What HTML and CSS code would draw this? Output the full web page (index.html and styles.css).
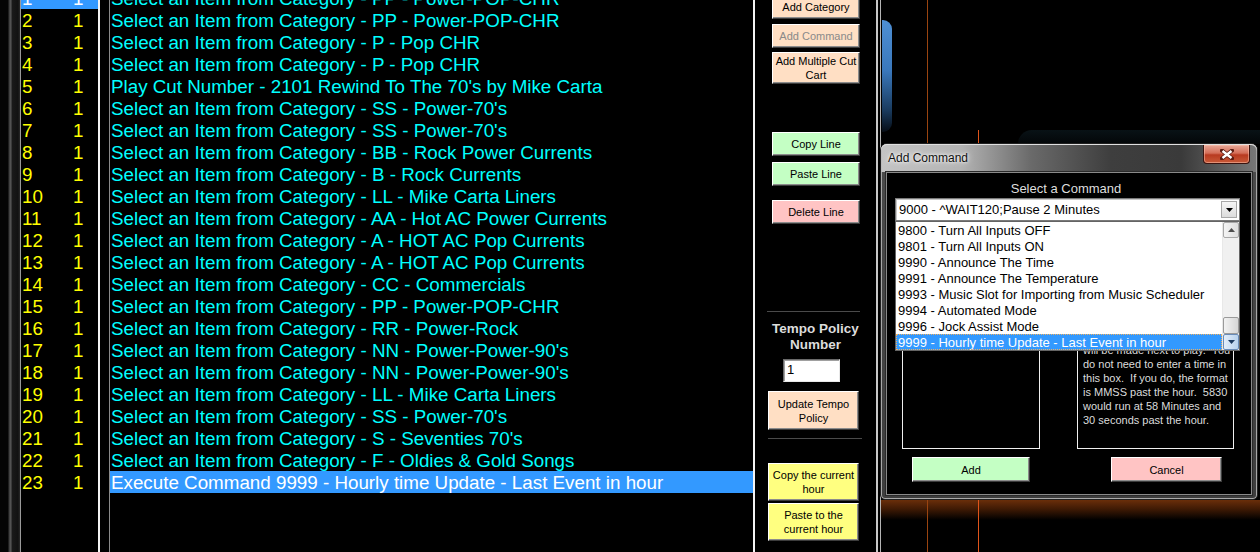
FILE: index.html
```html
<!DOCTYPE html>
<html lang="en">
<head>
    <meta charset="UTF-8">
    <title>Hour Editor</title>
    <link rel="stylesheet" href="styles.css">
</head>
<body>
    <div class="edge"></div>

    <div class="list nums">
        <div class="rows">
            <div class="row sel"><span>1</span><span>1</span></div>
            <div class="row"><span>2</span><span>1</span></div>
            <div class="row"><span>3</span><span>1</span></div>
            <div class="row"><span>4</span><span>1</span></div>
            <div class="row"><span>5</span><span>1</span></div>
            <div class="row"><span>6</span><span>1</span></div>
            <div class="row"><span>7</span><span>1</span></div>
            <div class="row"><span>8</span><span>1</span></div>
            <div class="row"><span>9</span><span>1</span></div>
            <div class="row"><span>10</span><span>1</span></div>
            <div class="row"><span>11</span><span>1</span></div>
            <div class="row"><span>12</span><span>1</span></div>
            <div class="row"><span>13</span><span>1</span></div>
            <div class="row"><span>14</span><span>1</span></div>
            <div class="row"><span>15</span><span>1</span></div>
            <div class="row"><span>16</span><span>1</span></div>
            <div class="row"><span>17</span><span>1</span></div>
            <div class="row"><span>18</span><span>1</span></div>
            <div class="row"><span>19</span><span>1</span></div>
            <div class="row"><span>20</span><span>1</span></div>
            <div class="row"><span>21</span><span>1</span></div>
            <div class="row"><span>22</span><span>1</span></div>
            <div class="row"><span>23</span><span>1</span></div>
        </div>
    </div>

    <div class="gap"></div>

    <div class="list main">
        <div class="rows">
            <div class="row">Select an Item from Category - PP - Power-POP-CHR</div>
            <div class="row">Select an Item from Category - PP - Power-POP-CHR</div>
            <div class="row">Select an Item from Category - P - Pop CHR</div>
            <div class="row">Select an Item from Category - P - Pop CHR</div>
            <div class="row">Play Cut Number - 2101 Rewind To The 70's by Mike Carta</div>
            <div class="row">Select an Item from Category - SS - Power-70's</div>
            <div class="row">Select an Item from Category - SS - Power-70's</div>
            <div class="row">Select an Item from Category - BB - Rock Power Currents</div>
            <div class="row">Select an Item from Category - B - Rock Currents</div>
            <div class="row">Select an Item from Category - LL - Mike Carta Liners</div>
            <div class="row">Select an Item from Category - AA - Hot AC Power Currents</div>
            <div class="row">Select an Item from Category - A - HOT AC Pop Currents</div>
            <div class="row">Select an Item from Category - A - HOT AC Pop Currents</div>
            <div class="row">Select an Item from Category - CC - Commercials</div>
            <div class="row">Select an Item from Category - PP - Power-POP-CHR</div>
            <div class="row">Select an Item from Category - RR - Power-Rock</div>
            <div class="row">Select an Item from Category - NN - Power-Power-90's</div>
            <div class="row">Select an Item from Category - NN - Power-Power-90's</div>
            <div class="row">Select an Item from Category - LL - Mike Carta Liners</div>
            <div class="row">Select an Item from Category - SS - Power-70's</div>
            <div class="row">Select an Item from Category - S - Seventies 70's</div>
            <div class="row">Select an Item from Category - F - Oldies &amp; Gold Songs</div>
            <div class="row sel">Execute Command 9999 - Hourly time Update - Last Event in hour</div>
        </div>
    </div>

    <div class="panel">
        <div class="btn peach top b-cat">Add Category</div>
        <div class="btn peach top b-cmd disabled">Add Command</div>
        <div class="btn peach top b-multi">Add Multiple Cut<br>Cart</div>
        <div class="btn green top b-copy">Copy Line</div>
        <div class="btn green top b-paste">Paste Line</div>
        <div class="btn pink top b-del">Delete Line</div>

        <div class="sep sep-1"></div>
        <div class="tempo-label">Tempo Policy<br>Number</div>
        <div class="tempo-input">1</div>
        <div class="btn peach low b-tempo">Update Tempo<br>Policy</div>
        <div class="sep sep-2"></div>
        <div class="btn yellow low b-hour">Copy the current<br>hour</div>
        <div class="btn yellow low b-hour2">Paste to the<br>current hour</div>
    </div>

    <div class="desk">
        <div class="desk-line"></div>
        <div class="blue-glow"></div>
        <div class="orange-v v1 upper"></div>
        <div class="orange-v v2 upper"></div>
        <div class="teal-band"></div>
        <div class="orange-glow"></div>
        <div class="orange-v v1 lower"></div>
        <div class="orange-v v2 lower"></div>

        <!-- Add Command dialog -->
        <div class="dlg">
            <div class="dlg-title">
                <span>Add Command</span>
                <div class="close-btn">
                    <svg width="14" height="11" viewBox="0 0 14 11">
                        <path d="M2 1.5 L12 9.5 M12 1.5 L2 9.5" stroke="#5a1a10" stroke-width="4" stroke-linecap="square"/>
                        <path d="M2.5 2 L11.5 9 M11.5 2 L2.5 9" stroke="#fff" stroke-width="2.4"/>
                    </svg>
                </div>
            </div>
            <div class="dlg-body">
                <div class="caption">Select a Command</div>
                <div class="combo">
                    <span>9000 - ^WAIT120;Pause 2 Minutes</span>
                    <div class="combo-btn">
                        <svg width="7" height="4" viewBox="0 0 7 4"><polygon points="0,0 7,0 3.5,4" fill="#000"/></svg>
                    </div>
                </div>

                <div class="boxes">
                    <div class="box box-left"></div>
                    <div class="box box-right">
                        will be made next to play.&nbsp; You<br>
                        do not need to enter a time in<br>
                        this box.&nbsp; If you do, the format<br>
                        is MMSS past the hour.&nbsp; 5830<br>
                        would run at 58 Minutes and<br>
                        30 seconds past the hour.
                    </div>
                </div>

                <div class="dlg-buttons">
                    <div class="btn green b-add">Add</div>
                    <div class="btn pink b-cancel">Cancel</div>
                </div>

                <div class="dropdown">
                    <div class="opt">9800 - Turn All Inputs OFF</div>
                    <div class="opt">9801 - Turn All Inputs ON</div>
                    <div class="opt">9990 - Announce The Time</div>
                    <div class="opt">9991 - Announce The Temperature</div>
                    <div class="opt">9993 - Music Slot for Importing from Music Scheduler</div>
                    <div class="opt">9994 - Automated Mode</div>
                    <div class="opt">9996 - Jock Assist Mode</div>
                    <div class="opt active">9999 - Hourly time Update - Last Event in hour</div>
                    <div class="scrollbar">
                        <div class="sb-btn">
                            <svg width="7" height="4" viewBox="0 0 7 4"><polygon points="0,4 7,4 3.5,0" fill="#4d4d4d"/></svg>
                        </div>
                        <div class="sb-track"></div>
                        <div class="sb-thumb"></div>
                        <div class="sb-btn sb-down">
                            <svg width="7" height="4" viewBox="0 0 7 4"><polygon points="0,0 7,0 3.5,4" fill="#1c3a60"/></svg>
                        </div>
                    </div>
                </div>
            </div>
        </div>
    </div>
</body>
</html>
```

FILE: styles.css
```css
* {
    margin: 0;
    padding: 0;
    box-sizing: border-box;
}

body {
    width: 1260px;
    height: 552px;
    overflow: hidden;
    background: #000;
    display: flex;
    font-family: 'Liberation Sans', Arial, sans-serif;
}

/* Left edge strip */
.edge {
    width: 20px;
    background:
        linear-gradient(to right, #050505 0, #050505 8px, #3a3a3a 9px, #5a5a5a 11px, #1a1a1a 12px, #121212 18px, #2a2a2a 20px);
}

/* Lists */
.list {
    height: 552px;
    overflow: hidden;
    background: #000;
}

.rows {
    margin-top: -13px;
}

.row {
    height: 22px;
    line-height: 23px;
    font-size: 18.8px;
    white-space: nowrap;
}

.nums {
    width: 80px;
    border-left: 1px solid #9a9a9a;
    border-right: 2px solid #f4f4f4;
    color: #ffff00;
}

.nums .row {
    display: grid;
    grid-template-columns: 51px 1fr;
    padding-left: 1px;
}

.gap {
    width: 9px;
    background: #000;
}

.main {
    width: 646px;
    border-left: 1px solid #8a8a8a;
    border-right: 2px solid #f4f4f4;
    color: #00ffff;
}

.main .row {
    padding-left: 1px;
}

.row.sel {
    background: #3399ff;
    color: #fff;
}

/* Button panel */
.panel {
    width: 123px;
    border-right: 2px solid #c8c8c8;
    display: flex;
    flex-direction: column;
    align-items: flex-start;
}

.btn {
    display: flex;
    align-items: center;
    justify-content: center;
    text-align: center;
    font-size: 11px;
    line-height: 14px;
    color: #000;
    border: 1px solid;
    border-color: #fff #3c3c3c #3c3c3c #fff;
    box-shadow: inset -1px -1px 0 #8c8c8c;
}

.peach { background: #ffdfc4; }
.green { background: #c4ffc4; }
.pink { background: #ffc4c4; }
.yellow { background: #ffff80; }

.disabled {
    color: #8a8a8a;
}

.top {
    margin-left: 17px;
    width: 88px;
    height: 24px;
}

.low {
    margin-left: 13px;
    width: 91px;
    height: 38px;
}

.b-cat { margin-top: -5px; }
.b-cmd { margin-top: 5px; }
.b-multi { margin-top: 4px; height: 32px; }
.b-copy { margin-top: 48px; }
.b-paste { margin-top: 6px; }
.b-del { margin-top: 14px; }

.sep {
    height: 2px;
    border-top: 1px solid #4a4a4a;
}

.sep-1 {
    margin-top: 87px;
    margin-left: 12px;
    width: 93px;
}

.sep-2 {
    margin-top: 8px;
    margin-left: 13px;
    width: 94px;
}

.tempo-label {
    margin-top: 8px;
    width: 121px;
    text-align: center;
    font-size: 13.5px;
    font-weight: 700;
    line-height: 16px;
    color: #dcdcdc;
}

.tempo-input {
    margin-top: 6px;
    margin-left: 28px;
    width: 57px;
    height: 23px;
    background: #fff;
    border: 1px solid;
    border-color: #6a6a6a #e8e8e8 #e8e8e8 #6a6a6a;
    box-shadow: inset 1px 1px 0 #a0a0a0;
    font-size: 13px;
    line-height: 20px;
    padding-left: 3px;
    color: #000;
}

.b-tempo { margin-top: 9px; height: 39px; }
.b-hour { margin-top: 23px; }
.b-hour2 { margin-top: 2px; }

/* Desktop area behind the dialog */
.desk {
    position: relative;
    flex: 1;
    background: #000;
}

.desk-line {
    position: absolute;
    left: 2px;
    top: 0;
    bottom: 0;
    width: 1px;
    background: #b4b4b4;
}

.blue-glow {
    position: absolute;
    left: 4px;
    top: 20px;
    width: 10px;
    height: 112px;
    border-radius: 0 9px 9px 0;
    background: linear-gradient(to bottom, #4e8fd4 0%, #3a78bc 45%, #1a3c60 80%, #060d16 100%);
}

.orange-v {
    position: absolute;
    width: 1px;
}

.v1 { left: 49px; background: #9a4410; }
.v2 { left: 100px; background: #e0541a; }

.v1.upper { top: 0; height: 143px; }
.v2.upper { top: 130px; height: 13px; }
.lower { top: 500px; bottom: 0; }

.teal-band {
    position: absolute;
    left: 140px;
    right: 0;
    top: 130px;
    height: 14px;
    border-radius: 14px 0 0 0;
    background: linear-gradient(to bottom, #091216, #030608);
}

.orange-glow {
    position: absolute;
    left: 3px;
    right: 0;
    top: 500px;
    height: 20px;
    background: linear-gradient(to bottom, #6a2e0a 0%, #3a1804 50%, #000 100%);
}

/* Dialog window */
.dlg {
    position: absolute;
    left: 2px;
    top: 143px;
    width: 378px;
    height: 357px;
    padding: 0 5px 4px 5px;
    border: 1px solid #202020;
    border-radius: 7px 7px 5px 5px;
    background: linear-gradient(to bottom, #6a6a6a 0, #4a4a4a 30px, #3e3e3e 100%);
    box-shadow: inset 0 0 0 1px #a8a8a8;
}

.dlg-title {
    position: relative;
    height: 28px;
    margin: 0 -5px;
    padding-left: 7px;
    border-radius: 6px 6px 0 0;
    background: linear-gradient(to right, #c4c4c4 0, #b4b4b4 80px, #6a6a6a 150px, #3e3e3e 230px, #3a3a3a 300px, #7a7a7a 378px);
    box-shadow: inset 0 1px 0 #e0e0e0, inset 1px 0 0 #bcbcbc, inset -1px 0 0 #a0a0a0;
    font-size: 12px;
    line-height: 28px;
    color: #111;
    text-shadow: 0 0 6px #fff, 0 0 3px #fff;
}

.close-btn {
    position: absolute;
    right: 7px;
    top: 1px;
    width: 47px;
    height: 19px;
    border: 1px solid #3a1410;
    border-top: none;
    border-radius: 0 0 4px 4px;
    background: linear-gradient(to bottom, #e8a898 0%, #d46e58 45%, #b83a20 55%, #c85a38 100%);
    box-shadow: inset 0 0 0 1px rgba(255, 200, 180, 0.5);
    display: flex;
    align-items: center;
    justify-content: center;
}

.dlg-body {
    position: relative;
    height: 323px;
    background: #000;
    border: 1px solid #8a8a8a;
    box-shadow: 0 0 0 1px #2a2a2a;
}

.caption {
    margin-top: 8px;
    text-align: center;
    font-size: 13px;
    line-height: 16px;
    color: #dedede;
    padding-right: 6px;
}

.combo {
    position: relative;
    margin: 1px 0 0 8px;
    width: 345px;
    height: 23px;
    background: #fff;
    border: 1px solid #7a7a7a;
    box-shadow: inset 1px 1px 0 #c8c8c8;
    font-size: 13px;
    line-height: 21px;
    padding-left: 3px;
    color: #000;
}

.combo-btn {
    position: absolute;
    right: 2px;
    top: 2px;
    width: 16px;
    height: 17px;
    background: linear-gradient(to bottom, #f6f6f6, #dcdcdc);
    border: 1px solid #a8a8a8;
    display: flex;
    align-items: center;
    justify-content: center;
}

.boxes {
    display: flex;
    margin-top: 110px;
    height: 118px;
}

.box {
    border: 1px solid #f0f0f0;
    height: 118px;
}

.box-left {
    margin-left: 15px;
    width: 138px;
}

.box-right {
    margin-left: 37px;
    width: 157px;
    padding: 11px 0 0 5px;
    font-size: 11px;
    line-height: 14px;
    color: #dcdcdc;
    white-space: nowrap;
    overflow: hidden;
}

.dlg-buttons {
    display: flex;
    margin-top: 8px;
}

.btn.b-add {
    margin-left: 25px;
    width: 118px;
    height: 25px;
}

.btn.b-cancel {
    margin-left: 81px;
    width: 111px;
    height: 25px;
}

/* Open dropdown list, lies over the boxes */
.dropdown {
    position: absolute;
    left: 8px;
    top: 48px;
    width: 345px;
    height: 130px;
    background: #fff;
    border: 1px solid #646464;
    padding: 0 17px 0 0;
}

.opt {
    height: 16px;
    line-height: 17px;
    font-size: 13px;
    padding-left: 2px;
    color: #000;
    white-space: nowrap;
}

.opt.active {
    background: #3399ff;
    color: #fff;
    outline: 1px dotted #f0b060;
    outline-offset: -1px;
}

.scrollbar {
    position: absolute;
    right: 0;
    top: 0;
    bottom: 0;
    width: 17px;
    display: flex;
    flex-direction: column;
    background: #f0f0f0;
    border-left: 1px solid #e8e8e8;
}

.sb-btn {
    height: 16px;
    background: linear-gradient(to right, #f4f4f4, #dedede);
    border: 1px solid #a8a8a8;
    border-radius: 2px;
    display: flex;
    align-items: center;
    justify-content: center;
}

.sb-track {
    flex: 1;
}

.sb-thumb {
    height: 17px;
    background: linear-gradient(to right, #f2f2f2, #d6d6d6);
    border: 1px solid #9a9a9a;
    border-radius: 2px;
}

.sb-down {
    background: linear-gradient(to right, #e4eefa, #b8d2ee);
    border-color: #6a8cb8;
}
```
